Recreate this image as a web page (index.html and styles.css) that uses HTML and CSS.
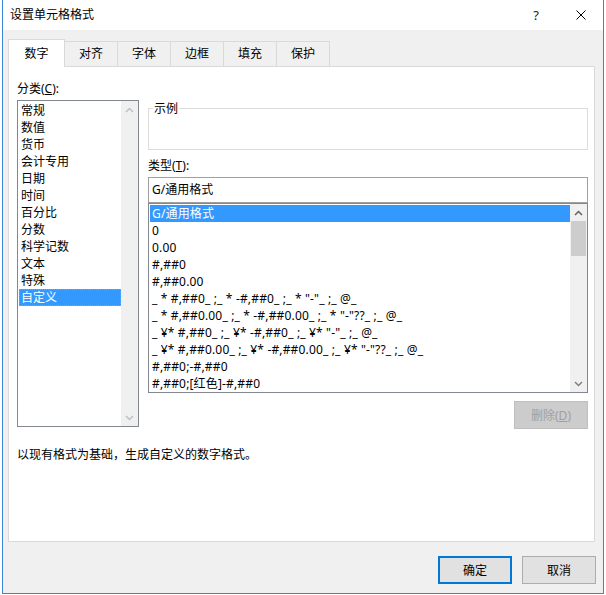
FILE: index.html
```html
<!DOCTYPE html>
<html lang="zh-CN">
<head>
<meta charset="utf-8">
<title>设置单元格格式</title>
<link rel="stylesheet" href="styles.css">
</head>
<body>
<div class="window">
  <div class="titlebar">
    <span class="title">设置单元格格式</span>
    <span class="tbtn help">?</span>
    <span class="tbtn close"><svg width="10" height="10" viewBox="0 0 10 10"><path d="M0.5 0.5 L9.5 9.5 M9.5 0.5 L0.5 9.5" stroke="#000" stroke-width="1" fill="none"/></svg></span>
  </div>
  <div class="body">
    <div class="tabs">
      <div class="tab active">数字</div>
      <div class="tab">对齐</div>
      <div class="tab">字体</div>
      <div class="tab">边框</div>
      <div class="tab">填充</div>
      <div class="tab">保护</div>
    </div>
    <div class="panel">
      <div class="cols">
        <div class="left">
          <div class="label">分类(<u>C</u>):</div>
          <div class="listbox cat">
            <div class="items">
              <div class="item">常规</div>
              <div class="item">数值</div>
              <div class="item">货币</div>
              <div class="item">会计专用</div>
              <div class="item">日期</div>
              <div class="item">时间</div>
              <div class="item">百分比</div>
              <div class="item">分数</div>
              <div class="item">科学记数</div>
              <div class="item">文本</div>
              <div class="item">特殊</div>
              <div class="item sel focus">自定义</div>
            </div>
            <div class="vscroll">
              <div class="arrow dis"><svg width="9" height="6" viewBox="0 0 9 6"><path d="M1 5 L4.5 1.5 L8 5" stroke="currentColor" stroke-width="1.5" fill="none"/></svg></div>
              <div class="track"></div>
              <div class="arrow dis"><svg width="9" height="6" viewBox="0 0 9 6"><path d="M1 1 L4.5 4.5 L8 1" stroke="currentColor" stroke-width="1.5" fill="none"/></svg></div>
            </div>
          </div>
        </div>
        <div class="right">
          <div class="sample"><span class="legend">示例</span></div>
          <div class="label type-label">类型(<u>T</u>):</div>
          <div class="input">G/通用格式</div>
          <div class="listbox fmt">
            <div class="items">
              <div class="item sel">G/通用格式</div>
              <div class="item">0</div>
              <div class="item">0.00</div>
              <div class="item">#,##0</div>
              <div class="item">#,##0.00</div>
              <div class="item">_ * #,##0_ ;_ * -#,##0_ ;_ * "-"_ ;_ @_</div>
              <div class="item">_ * #,##0.00_ ;_ * -#,##0.00_ ;_ * "-"??_ ;_ @_</div>
              <div class="item">_ ¥* #,##0_ ;_ ¥* -#,##0_ ;_ ¥* "-"_ ;_ @_</div>
              <div class="item">_ ¥* #,##0.00_ ;_ ¥* -#,##0.00_ ;_ ¥* "-"??_ ;_ @_</div>
              <div class="item">#,##0;-#,##0</div>
              <div class="item">#,##0;[红色]-#,##0</div>
            </div>
            <div class="vscroll">
              <div class="arrow"><svg width="9" height="6" viewBox="0 0 9 6"><path d="M1 5 L4.5 1.5 L8 5" stroke="currentColor" stroke-width="1.5" fill="none"/></svg></div>
              <div class="thumb"></div>
              <div class="track"></div>
              <div class="arrow down"><svg width="9" height="6" viewBox="0 0 9 6"><path d="M1 1 L4.5 4.5 L8 1" stroke="currentColor" stroke-width="1.5" fill="none"/></svg></div>
            </div>
          </div>
          <div class="btn disabled">删除(<u>D</u>)</div>
        </div>
      </div>
      <div class="desc">以现有格式为基础，生成自定义的数字格式。</div>
    </div>
    <div class="buttons">
      <div class="btn primary">确定</div>
      <div class="btn">取消</div>
    </div>
  </div>
</div>
</body>
</html>
```
FILE: styles.css
```css
* { box-sizing: border-box; }
html, body { margin: 0; padding: 0; }
body {
  background: #ffffff;
  font-family: "Noto Sans", "Noto Sans CJK SC", sans-serif;
  font-size: 12px;
  color: #000;
  width: 606px;
  height: 595px;
  overflow: hidden;
}
u { text-decoration: underline; text-underline-offset: 1px; }

.window {
  margin-left: 2px;
  width: 602px;
  height: 594px;
  border-left: 1px solid #3b86d4;
  border-right: 1px solid #3b86d4;
  border-bottom: 1px solid #3b86d4;
  background: #f0f0f0;
  display: flex;
  flex-direction: column;
}

.titlebar {
  height: 30px;
  background: #ffffff;
  display: flex;
  align-items: center;
  padding-left: 7px;
  flex-shrink: 0;
}
.title { flex: 1; line-height: 30px; }
.tbtn {
  height: 30px;
  display: flex;
  align-items: center;
  justify-content: center;
}
.help { width: 46px; font-size: 13px; color: #222; }
.close { width: 44px; }
.close svg { display: block; }

.body {
  flex: 1;
  padding: 9px 8px 0 5px;
  display: flex;
  flex-direction: column;
}

.tabs {
  height: 27px;
  display: flex;
  align-items: flex-end;
  position: relative;
  z-index: 1;
}
.tab {
  width: 54px;
  height: 25px;
  margin-left: -1px;
  border: 1px solid #d9d9d9;
  border-bottom: none;
  background: #f0f0f0;
  text-align: center;
  line-height: 24px;
}
.tab.active {
  width: 57px;
  height: 28px;
  margin-left: 0;
  margin-right: 0;
  margin-bottom: -1px;
  background: #ffffff;
  line-height: 27px;
}
.tab.active + .tab { margin-left: -1px; }

.panel {
  width: 587px;
  height: 476px;
  border: 1px solid #d9d9d9;
  background: #ffffff;
}

.cols {
  display: flex;
  gap: 9px;
  padding: 13px 6px 0 8px;
}
.left { width: 122px; }
.right {
  width: 440px;
  display: flex;
  flex-direction: column;
}
.label { line-height: 17px; height: 17px; }
.left .label { margin-bottom: 3px; }

.listbox {
  border: 1px solid #828790;
  display: flex;
  background: #fff;
  overflow: hidden;
}
.listbox .items {
  flex: 1;
  padding: 1px 0 0 1px;
  overflow: hidden;
}
.item {
  height: 17px;
  line-height: 17px;
  padding-left: 2px;
  white-space: pre;
  overflow: hidden;
}
.fmt .item { letter-spacing: 0.16px; }
.item.sel { background: #3399ff; color: #fff; }
.item.focus { border: 1px dotted #d8924a; padding-left: 1px; line-height: 15px; }

.vscroll {
  width: 17px;
  background: #f0f0f0;
  display: flex;
  flex-direction: column;
}
.vscroll .arrow {
  height: 17px;
  display: flex;
  align-items: center;
  justify-content: center;
  color: #606060;
  flex-shrink: 0;
}
.vscroll .arrow svg { display: block; }
.vscroll .arrow.dis { color: #c0c0c0; }
.vscroll .arrow.down { color: #808080; }
.vscroll .track { flex: 1; }
.vscroll .thumb {
  height: 35px;
  margin: 0 1px;
  background: #cdcdcd;
  flex-shrink: 0;
}

.cat { height: 327px; }

.sample {
  margin-top: 28px;
  height: 42px;
  border: 1px solid #dcdcdc;
  position: relative;
}
.legend {
  position: absolute;
  top: -9px;
  left: 4px;
  padding: 0 1px;
  background: #fff;
  line-height: 17px;
}
.type-label { margin-top: 7px; }
.input {
  margin-top: 3px;
  height: 26px;
  border: 1px solid #a0a0a0;
  padding-left: 3px;
  line-height: 24px;
}
.fmt { height: 190px; }

.btn {
  width: 74px;
  height: 28px;
  border: 1px solid #adadad;
  background: #e1e1e1;
  display: flex;
  align-items: center;
  justify-content: center;
}
.btn.disabled {
  margin-top: 8px;
  align-self: flex-end;
  background: #cccccc;
  border-color: #bfbfbf;
  color: #a0a0a0;
}
.btn.primary { border: 2px solid #0078d7; }

.desc {
  margin-top: 17px;
  padding-left: 8px;
  line-height: 17px;
}

.buttons {
  margin-top: 14px;
  margin-right: -1px;
  display: flex;
  justify-content: flex-end;
  gap: 10px;
}
```
